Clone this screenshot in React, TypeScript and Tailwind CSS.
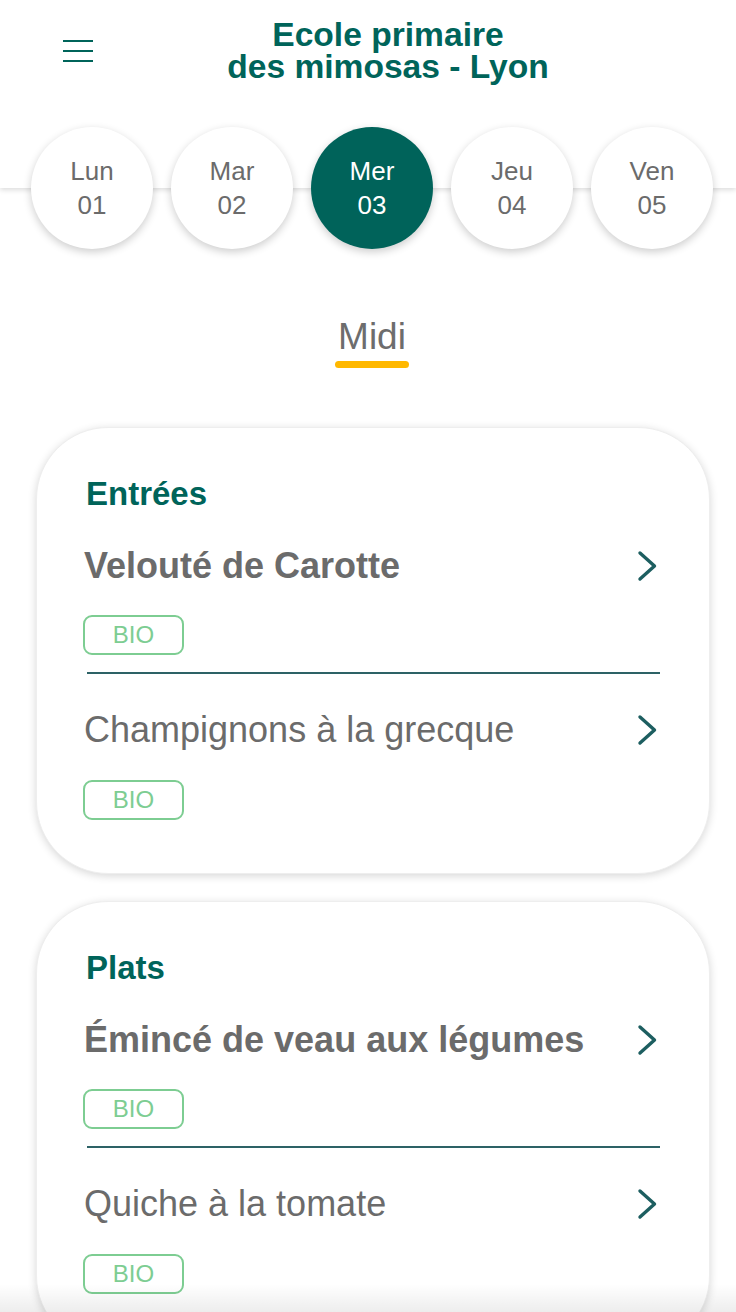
import React from "react";

const days = [
  { d: "Lun", n: "01" },
  { d: "Mar", n: "02" },
  { d: "Mer", n: "03", active: true },
  { d: "Jeu", n: "04" },
  { d: "Ven", n: "05" },
];

type Item = { name: string; bold?: boolean };
const sections: { title: string; items: Item[] }[] = [
  {
    title: "Entrées",
    items: [
      { name: "Velouté de Carotte", bold: true },
      { name: "Champignons à la grecque" },
    ],
  },
  {
    title: "Plats",
    items: [
      { name: "Émincé de veau aux légumes", bold: true },
      { name: "Quiche à la tomate" },
    ],
  },
];

function Chevron() {
  return (
    <svg width="20" height="32" viewBox="0 0 20 32" fill="none" className="mr-[2px]">
      <path d="M3 3 L17.5 16 L3 29" stroke="#1d5e60" strokeWidth="3.4" strokeLinecap="round" strokeLinejoin="round" />
    </svg>
  );
}

function Bio({ className = "" }: { className?: string }) {
  return (
    <div
      className={
        "flex h-[40px] w-[101px] items-center justify-center rounded-[9px] border-2 border-[#7dcd92] text-[24px] leading-none text-[#7dcd92] " +
        className
      }
    >
      BIO
    </div>
  );
}

function Card({ title, items, className = "" }: { title: string; items: Item[]; className?: string }) {
  return (
    <section
      className={
        "ml-[36px] w-[674px] rounded-[72px] border border-[#eeeeee] bg-white pt-[46px] pb-[53px] pl-[46px] pr-[50px] shadow-[0_2px_8px_rgba(0,0,0,0.16)] " +
        className
      }
    >
      <h2 className="pl-[3px] text-[33px] font-bold leading-[40px] text-[#00645a]">{title}</h2>
      {items.map((it, i) => (
        <div key={it.name}>
          {i > 0 && <div className="mt-[17px] ml-[4px] -mr-[1px] h-[2px] bg-[#2d6266]" />}
          <div className={"flex h-[40px] items-center justify-between " + (i === 0 ? "mt-[32px]" : "mt-[36px]")}>
            <span
              className={
                "pl-[1px] text-[36px] leading-[40px] text-[#6b6b6b] " + (it.bold ? "font-bold" : "font-normal")
              }
            >
              {it.name}
            </span>
            <Chevron />
          </div>
          <Bio className={i === 0 ? "mt-[29px]" : "mt-[30px]"} />
        </div>
      ))}
    </section>
  );
}

export default function App() {
  return (
    <div
      className="relative h-[1312px] w-[736px] overflow-hidden bg-white"
      style={{ fontFamily: '"Liberation Sans", Arial, sans-serif' }}
    >
      <header className="relative z-10 h-[188px] bg-white shadow-[0_2px_5px_rgba(0,0,0,0.14)]">
        <div className="flex items-center pt-[19px] pl-[63px] pr-[53px]">
          <div className="flex w-[30px] flex-col gap-[8px]">
            <span className="block h-[2px] w-[30px] bg-[#00645a]" />
            <span className="block h-[2px] w-[30px] bg-[#00645a]" />
            <span className="block h-[2px] w-[30px] bg-[#00645a]" />
          </div>
          <h1 className="flex-1 text-center text-[33.6px] font-bold leading-[32px] text-[#00645a]">
            Ecole primaire
            <br />
            des mimosas - Lyon
          </h1>
        </div>
      </header>

      <nav className="relative z-20 -mt-[61px] flex gap-[18px] pl-[31px]">
        {days.map((d) => (
          <div
            key={d.d}
            className={
              "flex h-[122px] w-[122px] flex-col items-center justify-center rounded-full text-[26px] leading-[34px] shadow-[0_3px_9px_rgba(0,0,0,0.2)] " +
              (d.active ? "bg-[#00635a] text-white" : "bg-white text-[#6b6b6b]")
            }
          >
            <span>{d.d}</span>
            <span>{d.n}</span>
          </div>
        ))}
      </nav>

      <div className="mt-[69px] flex flex-col items-center pl-[8px]">
        <span className="text-[37px] leading-none text-[#6d6d6d]">Midi</span>
        <span className="mt-[6px] block h-[7px] w-[74px] rounded-full bg-[#ffb800]" />
      </div>

      <div className="mt-[59px]">
        <Card title={sections[0].title} items={sections[0].items} />
        <Card title={sections[1].title} items={sections[1].items} className="mt-[27px]" />
      </div>

      <div className="pointer-events-none absolute bottom-0 left-0 h-[28px] w-full bg-gradient-to-b from-transparent to-[rgba(0,0,0,0.07)]" />
    </div>
  );
}
